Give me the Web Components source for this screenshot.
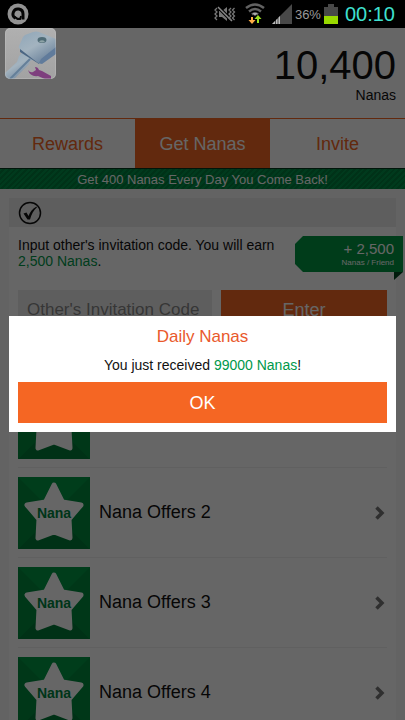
<!DOCTYPE html>
<html lang="en">
<head>
<meta charset="utf-8">
<meta name="viewport" content="width=device-width, initial-scale=1">
<title>Get Nanas</title>
<style>
html, body { margin: 0; height: 100%; background: #000; }
body { font-family: "Liberation Sans", Arial, sans-serif; color: #111; --orange: #f56623; --green: #00984a; }
</style>
</head>
<body>
<nana-app></nana-app>
<script>
function define(name, html) {
  const template = document.createElement('template');
  template.innerHTML = '<style>*{box-sizing:border-box}button,input{font-family:inherit;border:0;border-radius:0;margin:0}</style>' + html;
  customElements.define(name, class extends HTMLElement {
    constructor() {
      super();
      this.attachShadow({ mode: 'open' }).append(template.content.cloneNode(true));
    }
  });
}

define('status-bar', `
<style>
:host { display: flex; align-items: center; height: 28px; padding: 0 10px 0 7px; background: #000; color: #999; }
svg { display: block; flex: none; }
.space { flex: 1; }
.system { display: flex; align-items: center; gap: 3px; }
.percent { font-size: 13px; }
.time { font-size: 20px; color: #3fe0d0; margin-left: 4px; }
.wifi { margin: 0 4px 0 6px; }
</style>
<svg width="22" height="22" viewBox="0 0 22 22" role="img" aria-label="App notification"><circle cx="11" cy="11" r="10.500" fill="#929292"/><path d="M8.500 15.300A5 5 0 1 1 16 11v5.500" fill="none" stroke="#050505" stroke-width="3"/><path d="M8 13.500q1.500 3 5 2.500l1-3" fill="none" stroke="#050505" stroke-width="2"/><circle cx="11" cy="11.500" r="2.500" fill="#929292"/></svg>
<span class="space"></span>
<div class="system">
<svg width="22" height="16" viewBox="0 0 22 16" aria-hidden="true"><path d="M5 5h3l5-4v14l-5-4H5z" fill="#777"/><path d="M4 1l14 14" stroke="#000" stroke-width="3.500"/><path d="M4 1l14 14" stroke="#888" stroke-width="1.500"/><path d="M3 2L1 4l2 2-2 2 2 2-2 2 2 2M17 2l-2 2 2 2-2 2 2 2-2 2 2 2M20.500 2l-2 2 2 2-2 2 2 2-2 2 2 2" fill="none" stroke="#777" stroke-width="1.300"/></svg>
<svg class="wifi" width="20" height="22" viewBox="0 0 20 22" aria-hidden="true"><path d="M1 5q9-7 18 0M4 8.500q6-5 12 0M7 11.500q3-2.500 6 0" fill="none" stroke="#626262" stroke-width="2.500"/><path d="M7.500 10h5L10 13z" fill="#aaa"/><path d="M6 14v3H3.500L7 21l3.500-4H8v-3z" fill="#ffad45"/><path d="M12 20v-4H9.500L13 12l3.500 4H14v4z" fill="#99df20"/></svg>
<svg width="20" height="20" viewBox="0 0 20 20" aria-hidden="true"><path d="M0 20L20 0v20z" fill="#484848"/><path d="M0 20l3-3v3zM4 20v-4l1.500-1.500V20zM6.500 20v-6.500L8 12v8z" fill="#bbb"/></svg>
<span class="percent">36%</span>
<svg width="14" height="20" viewBox="0 0 14 20" aria-hidden="true"><path d="M4 0h6v3h4v9H0V3h4z" fill="#484848"/><path d="M0 12h14v8H0z" fill="#99d900"/></svg>
<span class="time">00:10</span>
</div>`);

define('nana-balance', `
<style>
:host { display: flex; flex-direction: column; align-items: flex-end; height: 90px; padding: 16px 9px 0 9px; background: #fff; }
strong { font-weight: 400; font-size: 40px; line-height: 43px; }
span { font-size: 14px; line-height: 16px; }
</style><strong><slot name="amount"></slot></strong><span><slot></slot></span>`);

define('nana-tab', `
<style>
:host { display: block; flex: 1; }
button { display: block; width: 100%; height: 50px; padding: 1px 0 0; font-size: 18px; background: #fff; color: var(--orange); border-top: 1px solid var(--orange); }
:host([active]) button { background: var(--orange); color: #fff; }
</style><button type="button"><slot></slot></button>`);

define('daily-banner', `
<style>
:host { display: block; height: 21px; text-align: center; font-size: 13px; line-height: 22px; color: #fff; border-top: 1px solid #00351a; background: repeating-linear-gradient(135deg, #00914a 0 2px, #007d3c 2px 4px); }
</style><slot></slot>`);

define('reward-tag', `
<style>
:host { display: block; flex: none; width: 108px; }
.face { height: 36px; padding: 4px 9px 0 0; text-align: right; color: #fff; background: #009743; clip-path: polygon(8px 0, 100% 0, 100% 100%, 8px 100%, 0 28px, 0 8px); }
b { display: block; font-weight: 400; font-size: 15px; line-height: 18px; }
small { display: block; font-size: 8px; line-height: 10px; }
.fold { width: 9px; height: 8px; margin-left: auto; background: #004520; clip-path: polygon(0 0, 100% 0, 0 100%); }
</style><div class="face"><b><slot name="amount"></slot></b><small><slot></slot></small></div><div class="fold"></div>`);

define('invite-card', `
<style>
:host { display: block; background: #fff; }
header { height: 29px; padding: 3px 9px; background: #ececec; }
svg { display: block; }
.intro { display: flex; justify-content: space-between; padding: 9px 0 0 9px; margin-right: -7px; }
p { margin: 0; padding-top: 1px; font-size: 14px; line-height: 16px; white-space: nowrap; flex: 1; min-width: 0; }
em { font-style: normal; color: var(--green); }
form { display: grid; grid-template-columns: 7fr 6fr; gap: 9px; padding: 10px 9px 9px; }
input, button { width: 100%; min-width: 0; height: 40px; }
input { padding: 0 9px; font-size: 17px; background: #ececec; color: #333; }
input::placeholder { color: #888; opacity: 1; }
button { font-size: 18px; background: var(--orange); color: #fff; padding: 0; }
</style>
<header><svg width="24" height="24" viewBox="0 0 24 24" role="img" aria-label="Done"><circle cx="12" cy="12" r="10.500" fill="none" stroke="#111" stroke-width="1.500"/><path d="M5.500 12.500l3-1 2 3.500C12 11 14 8 18.500 5.500l.5.800C15.500 9.500 13.500 13 12 18.500H9.500z" fill="#111"/></svg></header>
<div class="intro"><p>Input other's invitation code. You will earn<br><em>2,500 Nanas</em>.</p>
<reward-tag><span slot="amount">+ 2,500</span>Nanas / Friend</reward-tag></div>
<form><input type="text" aria-label="Other's Invitation Code" placeholder="Other's Invitation Code"><button type="button">Enter</button></form>`);

define('offer-row', `
<style>
:host { display: block; padding: 0 9px; background: #fff; }
a { display: flex; align-items: center; gap: 9px; height: 90px; padding-right: 2px; color: #111; text-decoration: none; font-size: 18px; border-bottom: 1px solid #f0f0f0; }
.tile { flex: none; display: grid; width: 72px; height: 72px; }
.tile > * { grid-area: 1 / 1; }
.tile span { place-self: center; font-size: 14px; font-weight: 700; color: #00853f; }
.label { flex: 1; }
.arrow { flex: none; }
</style>
<a href="#"><div class="tile"><svg width="72" height="72" viewBox="0 0 72 72" aria-hidden="true"><path fill="#009a45" d="M0 0h72v72H0z"/><path fill="#008a3e" d="M0 0l36 36L0 72zM72 0v72L36 36z"/><path fill="#007c38" d="M0 72l36-36 36 36z"/><path d="M36 8l8.500 17L63 28 51 42l1 19-16-6-16 6 1-19L9 28l18.500-3z" fill="#fff" stroke="#fff" stroke-width="5" stroke-linejoin="round"/></svg><span>Nana</span></div>
<span class="label"><slot></slot></span>
<svg class="arrow" width="10" height="16" viewBox="0 0 10 16" aria-hidden="true"><path d="M1.500 2.500L7 8l-5.500 5.500" fill="none" stroke="#777" stroke-width="3.500"/></svg></a>`);

define('key-badge', `
<style>:host { display: block; width: 51px; height: 51px; } svg { display: block; }</style>
<svg width="51" height="51" viewBox="0 0 51 51" role="img" aria-label="Key tool">
<defs><linearGradient id="plate" x2="0" y2="1"><stop stop-color="#b0b0b0"/><stop offset="1" stop-color="#a2a2a2"/></linearGradient><linearGradient id="steel" x2=".7" y2="1"><stop stop-color="#8fa6b8"/><stop offset=".5" stop-color="#a3b3bf"/><stop offset="1" stop-color="#68809a"/></linearGradient><clipPath id="shape"><rect width="51" height="51" rx="5"/></clipPath></defs>
<g clip-path="url(#shape)"><path fill="url(#plate)" d="M0 0h51v51H0z"/>
<path d="M17 25l-3 3-2 6L0 45v6h9l15-15 1-3 5-2z" fill="url(#steel)"/><path d="M5 51l20-20" stroke="#647f99" stroke-width="2"/>
<path d="M15 20l10 7 9 7v2L15 24z" fill="#4b6683"/>
<path d="M20 7l8-3q3-1 6 0l17 7v12L37 35q-2 1-4 0L15 21q-2-1-1-3l4-9z" fill="url(#steel)"/><path d="M51 19L36 31l-2 4 3 1 14-10z" fill="#607b9b"/>
<ellipse cx="37" cy="12" rx="4.500" ry="3" fill="#4f6b76"/><path d="M34 13.500q3-2.500 6 0-3 2-6 0z" fill="#8ea3a6"/>
<path d="M23 42q2 3 5 2l3-2-1-3q3 0 4 3l3 1 9 5v4h-4l-9-4q-8 1-10-6z" fill="#7e3f7e"/></g>
<rect x=".5" y=".5" width="50" height="50" rx="5" fill="none" stroke="#c4c4c4" stroke-opacity=".4"/></svg>`);

define('daily-dialog', `
<style>
:host { display: grid; align-items: center; padding: 0 9px; background: rgba(0,0,0,.6); }
section { display: flex; flex-direction: column; padding: 9px; text-align: center; background: #fff; }
h2 { margin: 0; font-size: 17px; line-height: 24px; font-weight: 400; color: #e9592c; }
p { margin: 0; padding: 8px 0; font-size: 14px; line-height: 17px; }
button { height: 41px; font-size: 18px; color: #fff; background: var(--orange); padding: 2px 0 0; }
::slotted(em) { font-style: normal; color: var(--green); }
</style><section role="dialog" aria-labelledby="title"><h2 id="title"><slot name="title"></slot></h2><p><slot></slot></p><button type="button">OK</button></section>`);

define('nana-app', `
<style>
:host { display: grid; grid-template-rows: auto 1fr; height: 100vh; overflow: hidden; }
main { position: relative; overflow: hidden; min-height: 0; background: #f7f7f7; }
nav { display: flex; }
.cards { display: grid; gap: 39px; padding: 9px 9px 0; }
key-badge { position: absolute; top: 0; left: 5px; }
daily-dialog { position: absolute; inset: 0; }
</style>
<status-bar></status-bar>
<main>
<nana-balance><span slot="amount">10,400</span>Nanas</nana-balance>
<nav><nana-tab>Rewards</nana-tab><nana-tab active>Get Nanas</nana-tab><nana-tab>Invite</nana-tab></nav>
<daily-banner>Get 400 Nanas Every Day You Come Back!</daily-banner>
<div class="cards"><invite-card></invite-card>
<div class="offers"><offer-row>Nana Offers 1</offer-row><offer-row>Nana Offers 2</offer-row><offer-row>Nana Offers 3</offer-row><offer-row>Nana Offers 4</offer-row></div></div>
<daily-dialog><span slot="title">Daily Nanas</span>You just received <em>99000 Nanas</em>!</daily-dialog>
<key-badge></key-badge>
</main>`);
</script>
</body>
</html>
